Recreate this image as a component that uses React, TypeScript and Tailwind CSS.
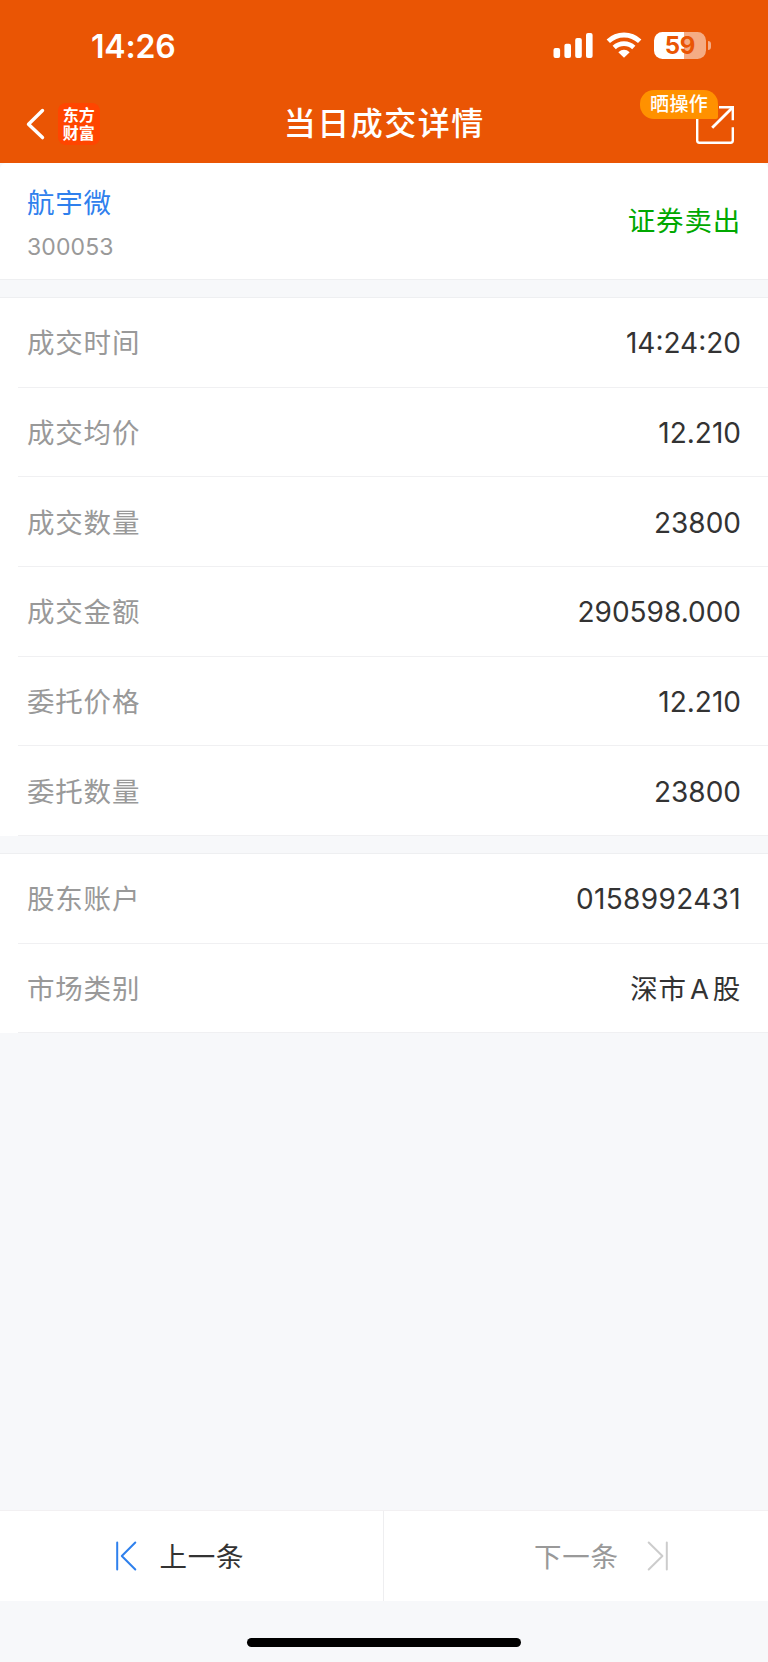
import React from "react";

type Item = { label: string; value: string };

const dealRows: Item[] = [
  { label: "成交时间", value: "14:24:20" },
  { label: "成交均价", value: "12.210" },
  { label: "成交数量", value: "23800" },
  { label: "成交金额", value: "290598.000" },
  { label: "委托价格", value: "12.210" },
  { label: "委托数量", value: "23800" },
];

function Row({ label, children }: { label: string; children: React.ReactNode }) {
  return (
    <div className="flex h-[89.67px] pl-[17.5px]">
      <div className="flex flex-1 items-center justify-between border-b border-[#f0f0f2] pl-[9.5px] pr-[27px] pt-[2px]">
        <span className="text-[27.5px] leading-[40px] tracking-[0.8px] text-[#999999]">{label}</span>
        <span className="text-[28px] leading-[40px] text-[#333333]">{children}</span>
      </div>
    </div>
  );
}

function StatusBar() {
  return (
    <div className="flex h-[86px] items-start justify-between pl-[91px] pr-[57px]">
      <span className="mt-[27px] text-[32px] font-semibold leading-[40px] tracking-[-0.2px]">14:26</span>
      <div className="mt-[30px] flex items-center">
        <svg width="40" height="30" viewBox="0 0 40 30" fill="currentColor">
          <rect x="0.5" y="18" width="6.6" height="10" rx="2" />
          <rect x="11.4" y="13.8" width="6.6" height="14.2" rx="2" />
          <rect x="22.2" y="8" width="6.6" height="20" rx="2" />
          <rect x="33" y="3" width="6.6" height="25" rx="2" />
        </svg>
        <svg className="ml-[12.5px]" width="36" height="30" viewBox="0 0 36 30" fill="none" stroke="currentColor">
          <path d="M2.3 11.2 A22.8 22.8 0 0 1 33.7 11.2" strokeWidth="4.9" />
          <path d="M8.2 17.5 A14.2 14.2 0 0 1 27.8 17.5" strokeWidth="4.7" />
          <path d="M18 27.7 L12.3 22.2 Q18 17.5 23.7 22.2 Z" fill="currentColor" stroke="none" />
        </svg>
        <div className="ml-[12.5px] flex items-center">
          <div className="flex h-[27px] w-[52px] items-center justify-center rounded-[8.5px] bg-linear-to-r from-white from-[58.5%] to-[#f5ac84] to-[58.5%] text-[24px] font-bold leading-[27px] tracking-[-0.3px] text-[#ea5504]">
            59
          </div>
          <div className="ml-[1.5px] h-[9px] w-[3.5px] rounded-r-full bg-[#f5ac84]" />
        </div>
      </div>
    </div>
  );
}

function NavBar() {
  return (
    <div className="relative flex h-[77px] items-start">
      <svg className="ml-[23.5px] mt-[20px]" width="24" height="36" viewBox="0 0 24 36" fill="none" stroke="currentColor" strokeWidth="3.4" strokeLinecap="round" strokeLinejoin="round">
        <path d="M18.5 4.5 L4.5 18.2 L18.5 31.6" />
      </svg>
      <div className="ml-[10.2px] mt-[16.7px] flex h-[42px] w-[42px] flex-col items-center justify-center rounded-[8px] bg-[#ff4500] text-[16px] font-bold leading-[18px]">
        <span>东方</span>
        <span>财富</span>
      </div>
      <h1 className="ml-[184px] mt-[14px] text-[32px] font-medium leading-[48px] tracking-[1.5px]">当日成交详情</h1>
      <svg className="absolute left-[694px] top-[18px]" width="44" height="44" viewBox="0 0 44 44" fill="none" stroke="currentColor" strokeWidth="2.4">
        <path d="M3.2 8 V36.5 Q3.2 38.7 5.4 38.7 H36.6 Q38.8 38.7 38.8 36.5 V23.3" />
        <path d="M25 3.2 H38.8 V16.3" />
        <path d="M38.8 3.2 L18.2 23.8" strokeWidth="2.8" />
      </svg>
      <div className="absolute left-[640.3px] top-[4px] flex h-[28.5px] w-[77.5px] items-center justify-center rounded-[14px] rounded-br-[2px] bg-[#ff9100] pt-[2px] text-[19px] font-medium leading-[28px] tracking-[0.3px]">
        晒操作
      </div>
    </div>
  );
}

export default function App() {
  return (
    <div className="flex h-[1662px] w-[768px] flex-col overflow-hidden bg-[#f7f8fa] font-['Inter','Noto_Sans_CJK_SC',sans-serif]">
      <header className="h-[163.4px] shrink-0 bg-[#ea5504] text-white">
        <StatusBar />
        <NavBar />
      </header>

      <section className="flex h-[117px] shrink-0 items-center justify-between rounded-t-[6px] border-b border-[#eeeff1] bg-white px-[27px]">
        <div className="flex flex-col pt-[4px]">
          <span className="text-[27.5px] leading-[40px] tracking-[0.8px] text-[#2f80ed]">航宇微</span>
          <span className="mt-[8px] text-[23px] leading-[32px] tracking-[0.1px] text-[#999999]">300053</span>
        </div>
        <span className="text-[27.5px] leading-[40px] tracking-[0.8px] text-[#00a800]">证券卖出</span>
      </section>

      <section className="mt-[16.6px] shrink-0 border-t border-[#eeeff1] bg-white">
        {dealRows.map((r) => (
          <Row key={r.label} label={r.label}>{r.value}</Row>
        ))}
      </section>

      <section className="mt-[17px] shrink-0 border-t border-[#eeeff1] bg-white">
        <Row label="股东账户"><span className="tracking-[0.35px]">0158992431</span></Row>
        <Row label="市场类别">
          <span className="text-[27.5px] tracking-[0.8px]">深市<span className="mx-[3px]">A</span>股</span>
        </Row>
      </section>

      <div className="flex-1" />

      <nav className="flex h-[91px] shrink-0 border-t border-[#f2f0f2] bg-white text-[27.5px] leading-[40px] tracking-[0.8px]">
        <div className="flex w-[384px] items-center border-r border-[#eeeef0] pl-[115px] text-[#333333]">
          <svg width="22" height="30" viewBox="0 0 22 30" fill="none" stroke="#2f80ed" strokeWidth="2" strokeLinecap="round" strokeLinejoin="round">
            <path d="M2.2 1.5 V28.5 M20.3 1.5 L6.8 15 L20.3 28.5" />
          </svg>
          <span className="ml-[22.5px] pt-[1px]">上一条</span>
        </div>
        <div className="flex flex-1 items-center pl-[150px] text-[#999999]">
          <span className="pt-[1px]">下一条</span>
          <svg className="ml-[28.5px]" width="22" height="30" viewBox="0 0 22 30" fill="none" stroke="#cccccc" strokeWidth="2" strokeLinecap="round" strokeLinejoin="round">
            <path d="M19.8 1.5 V28.5 M1.7 1.5 L15.4 15 L1.7 28.5" />
          </svg>
        </div>
      </nav>

      <div className="flex h-[61px] shrink-0 justify-center">
        <div className="mt-[37px] h-[9px] w-[274px] rounded-full bg-black" />
      </div>
    </div>
  );
}
